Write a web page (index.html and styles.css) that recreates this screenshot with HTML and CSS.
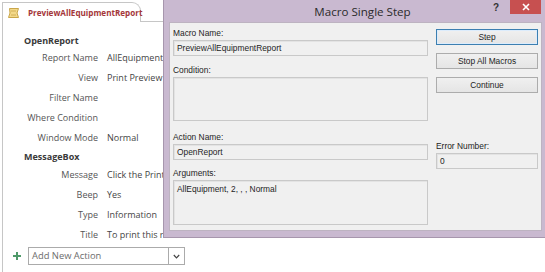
FILE: index.html
```html
<!DOCTYPE html>
<html>
<head>
<meta charset="utf-8">
<link rel="stylesheet" href="styles.css">
</head>
<body>
<div class="screen">
  <div class="editor">
    <div class="tabstrip">
      <div class="tab">
        <svg class="tab-icon" width="13" height="12" viewBox="0 0 13 12">
          <path d="M2.5 1.5 H11.5 L10 6 L11.5 10.5 H1.5 L3 6 Z" fill="#f3d98a" stroke="#c9a64a" stroke-width="1"/>
          <path d="M4 4 H9 M4 8 H9" stroke="#c9a64a" stroke-width="0.8"/>
        </svg>
        <span class="tab-title">PreviewAllEquipmentReport</span>
      </div>
      <div class="tab-rest"></div>
    </div>
    <div class="macro-body">
      <div class="action-head">OpenReport</div>
      <div class="arg"><span class="arg-label">Report Name</span><span class="arg-value">AllEquipment</span></div>
      <div class="arg"><span class="arg-label">View</span><span class="arg-value">Print Preview</span></div>
      <div class="arg"><span class="arg-label">Filter Name</span><span class="arg-value"></span></div>
      <div class="arg"><span class="arg-label">Where Condition</span><span class="arg-value"></span></div>
      <div class="arg"><span class="arg-label">Window Mode</span><span class="arg-value">Normal</span></div>
      <div class="action-head second">MessageBox</div>
      <div class="arg"><span class="arg-label">Message</span><span class="arg-value">Click the Print</span></div>
      <div class="arg"><span class="arg-label">Beep</span><span class="arg-value">Yes</span></div>
      <div class="arg"><span class="arg-label">Type</span><span class="arg-value">Information</span></div>
      <div class="arg"><span class="arg-label">Title</span><span class="arg-value">To print this r</span></div>
      <div class="add-row">
        <svg class="plus" width="8" height="8" viewBox="0 0 8 8"><path d="M3 0 H5 V3 H8 V5 H5 V8 H3 V5 H0 V3 H3 Z" fill="#4f9a6a"/></svg>
        <div class="combo">
          <span class="combo-text">Add New Action</span>
          <span class="combo-btn"><svg width="7" height="5" viewBox="0 0 7 5"><path d="M0.8 1 L3.5 3.8 L6.2 1" fill="none" stroke="#444" stroke-width="1.2"/></svg></span>
        </div>
      </div>
    </div>
  </div>

  <div class="dialog">
    <div class="titlebar">
      <span class="title">Macro Single Step</span>
      <span class="help">?</span>
      <span class="close"><svg width="8" height="8" viewBox="0 0 8 8"><path d="M1 1 L7 7 M7 1 L1 7" stroke="#fff" stroke-width="1.6"/></svg></span>
    </div>
    <div class="client">
      <div class="col-left">
        <div class="lbl first">Macro Name:</div>
        <div class="box">PreviewAllEquipmentReport</div>
        <div class="lbl cond">Condition:</div>
        <div class="box tall-cond"></div>
        <div class="lbl act">Action Name:</div>
        <div class="box">OpenReport</div>
        <div class="lbl argl">Arguments:</div>
        <div class="box tall-args">AllEquipment, 2, , , Normal</div>
      </div>
      <div class="col-right">
        <div class="btn focused">Step</div>
        <div class="btn">Stop All Macros</div>
        <div class="btn cont">Continue</div>
        <div class="lbl err">Error Number:</div>
        <div class="box">0</div>
      </div>
    </div>
  </div>
</div>
</body>
</html>
```

FILE: styles.css
```css
html, body {
  margin: 0;
  padding: 0;
  background: #ffffff;
}
.screen {
  position: relative;
  width: 545px;
  height: 272px;
  overflow: hidden;
  background: #ffffff;
}
.editor {
  height: 272px;
  display: flex;
  flex-direction: column;
}
.tabstrip {
  display: flex;
  align-items: flex-end;
  height: 22px;
}
.tab {
  display: flex;
  align-items: center;
  gap: 8px;
  height: 19px;
  width: 124px;
  margin-left: 2px;
  padding-left: 4px;
  padding-right: 9px;
  border: 1px solid #c6c6c6;
  border-bottom: none;
  border-top-right-radius: 9px;
  background: #ffffff;
}
.tab-icon {
  flex: none;
}
.tab-title {
  font-family: "Open Sans", "Noto Sans", sans-serif;
  font-weight: 700;
  font-size: 8.1px;
  color: #a4373a;
  white-space: nowrap;
}
.tab-rest {
  flex: 1;
  border-bottom: 1px solid #c6c6c6;
}
.macro-body {
  flex: 1;
  margin-left: 2px;
  border-left: 1px solid #c6c6c6;
  padding-top: 10px;
  font-family: "Open Sans", "Noto Sans", sans-serif;
  font-size: 9px;
  color: #444444;
}
.action-head {
  height: 16px;
  line-height: 17px;
  padding-left: 21px;
  font-weight: 700;
  color: #3a3a3a;
}
.action-head.second {
  height: 17px;
  line-height: 17px;
}
.arg {
  display: grid;
  grid-template-columns: 95px auto;
  column-gap: 9px;
  height: 20px;
  line-height: 20px;
  white-space: nowrap;
}
.arg-label {
  text-align: right;
  color: #555555;
}
.arg-value {
  color: #444444;
}
.add-row {
  display: flex;
  align-items: center;
  gap: 7px;
  margin-top: 2px;
  padding-left: 10px;
}
.plus {
  flex: none;
}
.combo {
  display: flex;
  width: 155px;
  height: 16px;
  border: 1px solid #ababab;
  background: #fff;
}
.combo-text {
  flex: 1;
  padding-left: 3px;
  line-height: 16px;
  color: #6d6d6d;
  font-size: 9.4px;
}
.combo-btn {
  width: 15px;
  border-left: 1px solid #ababab;
  display: flex;
  align-items: center;
  justify-content: center;
}

/* Dialog */
.dialog {
  position: absolute;
  left: 163px;
  top: 0;
  width: 382px;
  height: 238px;
  box-sizing: border-box;
  background: #c9b9d0;
  border: 1px solid #a796ad;
  border-top: none;
  border-right: none;
  display: flex;
  flex-direction: column;
  padding: 0 3px 6px 5px;
  font-family: "Liberation Sans", Arial, sans-serif;
}
.titlebar {
  position: relative;
  height: 22px;
  display: flex;
  align-items: center;
  justify-content: center;
}
.title {
  font-family: "Open Sans", "Noto Sans", sans-serif;
  font-size: 11.6px;
  color: #2b2b2b;
  margin-top: 1px;
  margin-left: 14px;
}
.help {
  position: absolute;
  right: 43px;
  top: 2px;
  font-family: "Liberation Sans", Arial, sans-serif;
  font-weight: 700;
  font-size: 10px;
  color: #333;
}
.close {
  position: absolute;
  right: 1px;
  top: 0;
  width: 31px;
  height: 14px;
  background: #c75050;
  display: flex;
  align-items: center;
  justify-content: center;
}
.client {
  flex: 1;
  background: #f0f0f0;
  border: 1px solid #bdb3c1;
  display: flex;
  gap: 8px;
  padding: 0 3px 0 3px;
  font-size: 8.4px;
  color: #1e1e1e;
}
.col-left {
  width: 255px;
  display: flex;
  flex-direction: column;
}
.col-right {
  width: 102px;
  display: flex;
  flex-direction: column;
  padding-top: 6px;
}
.lbl {
  height: 11px;
  line-height: 11px;
  white-space: nowrap;
}
.lbl.first { margin-top: 5px; }
.lbl.cond { margin-top: 9px; }
.lbl.act { margin-top: 11px; }
.lbl.argl { margin-top: 8px; }
.lbl.err { margin-top: 48px; }
.box {
  box-sizing: border-box;
  margin-top: 1px;
  height: 16px;
  line-height: 14px;
  padding-left: 3px;
  background: #f0f0f0;
  border: 1px solid #c9c9c9;
  box-shadow: inset 1px 1px 0 #e3e3e3;
  white-space: nowrap;
}
.box.tall-cond { height: 44px; }
.box.tall-args { height: 45px; padding-top: 1px; }
.btn {
  box-sizing: border-box;
  height: 16px;
  line-height: 14px;
  text-align: center;
  border: 1px solid #acacac;
  background: linear-gradient(#f0f0f0, #e5e5e5);
  margin-bottom: 8px;
}
.btn.focused {
  border-color: #3c7fb1;
  box-shadow: inset 0 0 0 1px #dcecfc;
}
.btn.cont { margin-bottom: 0; }
```
